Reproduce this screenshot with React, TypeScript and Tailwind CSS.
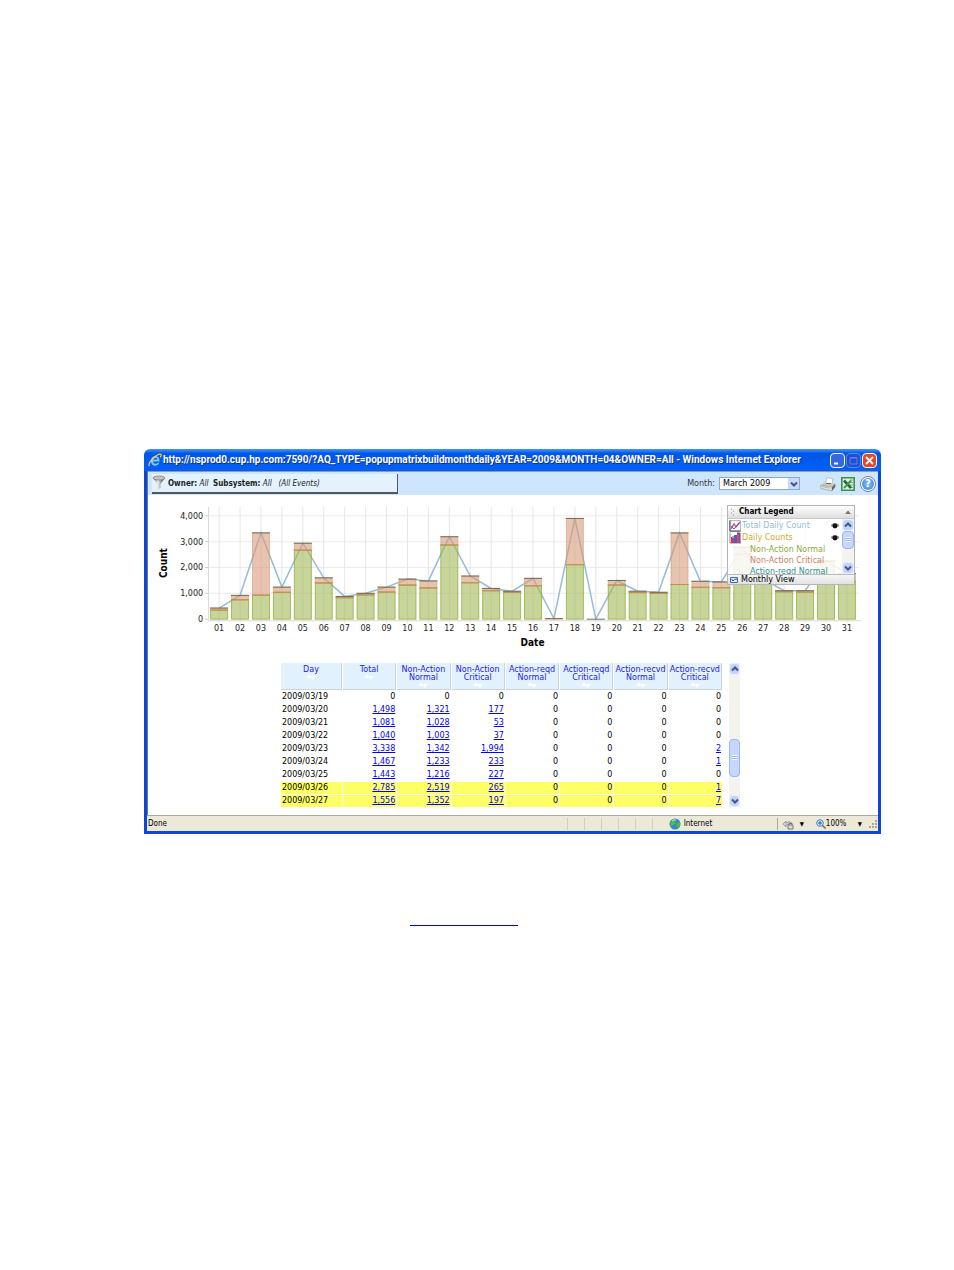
import React, { useState } from 'react';

interface DayCount {
  day: string;
  normal: number;
  total: number;
}

const days: DayCount[] = [
  { day: '01', normal: 350, total: 430 },
  { day: '02', normal: 750, total: 920 },
  { day: '03', normal: 930, total: 3340 },
  { day: '04', normal: 1040, total: 1240 },
  { day: '05', normal: 2670, total: 2940 },
  { day: '06', normal: 1400, total: 1600 },
  { day: '07', normal: 830, total: 880 },
  { day: '08', normal: 940, total: 1000 },
  { day: '09', normal: 1050, total: 1240 },
  { day: '10', normal: 1320, total: 1550 },
  { day: '11', normal: 1210, total: 1480 },
  { day: '12', normal: 2870, total: 3190 },
  { day: '13', normal: 1410, total: 1670 },
  { day: '14', normal: 1100, total: 1190 },
  { day: '15', normal: 1040, total: 1080 },
  { day: '16', normal: 1290, total: 1580 },
  { day: '17', normal: 0, total: 20 },
  { day: '18', normal: 2110, total: 3900 },
  { day: '19', normal: 0, total: 0 },
  { day: '20', normal: 1321, total: 1498 },
  { day: '21', normal: 1028, total: 1081 },
  { day: '22', normal: 1003, total: 1040 },
  { day: '23', normal: 1342, total: 3338 },
  { day: '24', normal: 1233, total: 1467 },
  { day: '25', normal: 1216, total: 1443 },
  { day: '26', normal: 2519, total: 2785 },
  { day: '27', normal: 1352, total: 1556 },
  { day: '28', normal: 1060, total: 1100 },
  { day: '29', normal: 1050, total: 1100 },
  { day: '30', normal: 2230, total: 2250 },
  { day: '31', normal: 1460, total: 1770 },
];

const columns = [
  ['Day'],
  ['Total'],
  ['Non-Action', 'Normal'],
  ['Non-Action', 'Critical'],
  ['Action-reqd', 'Normal'],
  ['Action-reqd', 'Critical'],
  ['Action-recvd', 'Normal'],
  ['Action-recvd', 'Critical'],
];

const rows = [
  ['2009/03/19', '0', '0', '0', '0', '0', '0', '0'],
  ['2009/03/20', '1,498', '1,321', '177', '0', '0', '0', '0'],
  ['2009/03/21', '1,081', '1,028', '53', '0', '0', '0', '0'],
  ['2009/03/22', '1,040', '1,003', '37', '0', '0', '0', '0'],
  ['2009/03/23', '3,338', '1,342', '1,994', '0', '0', '0', '2'],
  ['2009/03/24', '1,467', '1,233', '233', '0', '0', '0', '1'],
  ['2009/03/25', '1,443', '1,216', '227', '0', '0', '0', '0'],
  ['2009/03/26', '2,785', '2,519', '265', '0', '0', '0', '1'],
  ['2009/03/27', '1,556', '1,352', '197', '0', '0', '0', '7'],
];

const highlighted = ['2009/03/26', '2009/03/27'];

const BASE = 124;
const xOf = (i: number) => 71 + i * 20.9;
const yOf = (v: number) => BASE - v * 0.0258;

const Chart: React.FC = () => (
  <svg viewBox="0 0 729 156" className="block h-auto w-full font-['DejaVu_Sans',sans-serif] text-[8px]" role="img" aria-label="Daily event counts">
    {[1000, 2000, 3000, 4000].map((v) => (
      <path key={v} d={`M60 ${yOf(v)}H710`} stroke="#ebebeb" />
    ))}
    {days.map((d, i) => (
      <path key={d.day} d={`M${xOf(i)} 12V128`} stroke="#e6e6e6" />
    ))}
    {[0, 1000, 2000, 3000, 4000].map((v) => (
      <g key={v}>
        <path d={`M57 ${yOf(v)}h3`} stroke="#ccc" />
        <text x="55" y={yOf(v) + 3} textAnchor="end" fill="#222">
          {v.toLocaleString('en-US')}
        </text>
      </g>
    ))}
    <polyline
      points={days.map((d, i) => `${xOf(i)},${yOf(d.total)}`).join(' ')}
      fill="none"
      stroke="#94bbd8"
      strokeWidth="1.5"
    />
    {days.map((d, i) => {
      const x = xOf(i) - 8.5;
      const top = yOf(d.total);
      const mid = yOf(d.normal);
      return (
        <g key={d.day}>
          <rect x={x} y={top} width="17" height={mid - top} fill="#d99b7a" fillOpacity="0.6" stroke="#d99370" strokeOpacity="0.55" />
          <rect x={x} y={mid} width="17" height={BASE - mid} fill="#a2b956" fillOpacity="0.6" stroke="#8fac35" strokeOpacity="0.75" />
          <path d={`M${x - 0.5} ${mid}h18`} stroke="#cf8450" strokeOpacity={d.normal ? 0.9 : 0} />
          <path d={`M${x - 0.5} ${top}h18`} stroke="#6d6f55" />
        </g>
      );
    })}
    <path d="M60.5 12V125" stroke="#d8d8d8" />
    <path d="M60 125.500H712" stroke="#d8d8d8" />
    {days.map((d, i) => (
      <text key={d.day} x={xOf(i)} y="136" textAnchor="middle" fill="#222">
        {d.day}
      </text>
    ))}
    <g fontFamily="DejaVu Sans Condensed, DejaVu Sans, sans-serif" fontSize="10" fontWeight="700" textAnchor="middle">
      <text x="384" y="151">Date</text>
      <text transform="translate(19 68) rotate(-90)">Count</text>
    </g>
  </svg>
);

const Chevron: React.FC<{ down?: boolean }> = ({ down }) => (
  <svg viewBox="0 0 8 8" className="size-2">
    <path d={down ? 'M1 2.500l3 3 3-3' : 'M1 5.500l3-3 3 3'} fill="none" stroke="#3f5789" strokeWidth="2" />
  </svg>
);

const ScrollButton: React.FC<{ down?: boolean; label: string }> = ({ down, label }) => (
  <button
    aria-label={label}
    className="flex h-3 w-full shrink-0 items-center justify-center rounded-sm border border-[#e8effe] bg-[#c3d3fc]"
  >
    <Chevron down={down} />
  </button>
);

const Grip: React.FC = () => (
  <svg viewBox="0 0 6 6" className="size-1.5">
    <path d="M0 .5h6M0 2.500h6M0 4.500h6" stroke="#f0f5ff" />
    <path d="M0 1.500h6M0 3.500h6" stroke="#93abe6" strokeWidth=".7" />
  </svg>
);

const Eye: React.FC = () => (
  <svg viewBox="0 0 10 8" className="mr-0.5 h-2 w-2.5">
    <path d="M1 4Q5 .5 9 4 5 7.500 1 4z" fill="#8a8a8a" />
    <circle cx="5" cy="4" r="2.400" fill="#111" />
    <path d="M1 3.500Q5-.5 9 3.500" fill="none" stroke="#444" strokeWidth=".8" />
  </svg>
);

const Legend: React.FC = () => {
  const [open, setOpen] = useState(true);

  return (
    <div className="absolute top-[10px] right-[23px] w-32 border border-[#b5b5b5] bg-white/85 text-[8px] leading-3 text-black">
      <div className="flex h-[13px] items-center border-b border-[#c8c8c8] bg-linear-to-b from-white to-[#dedede]">
        <svg viewBox="0 0 8 8" className="ml-px size-2">
          <path d="M2 1h1M4 3h1M2 5h1M4 7h1" stroke="#888" />
        </svg>
        <span className="ml-0.5 font-['DejaVu_Sans_Condensed','DejaVu_Sans',sans-serif] font-bold">Chart Legend</span>
        <button aria-label="Collapse legend" onClick={() => setOpen(!open)} className="mr-0.5 ml-auto">
          <svg viewBox="0 0 8 6" className="h-1.5 w-2">
            <path d="M1 5L4 1.500l3 3.500z" fill="#777" />
          </svg>
        </button>
      </div>
      {open && (
        <div className="flex h-[55px]">
          <div className="min-w-0 grow overflow-hidden whitespace-nowrap">
            <div className="flex h-[13px] items-center pl-px">
              <svg viewBox="0 0 12 12" className="size-3">
                <path d="M.5.5h11v11H.5z" fill="#f5f5fa" stroke="#bbb" />
                <path d="M1 .5V11h10.500" fill="none" stroke="#444" />
                <path d="M2 9l3-5 2 3 4-5" fill="none" stroke="#c04a8d" strokeWidth="1.300" />
                <path d="M2 6l3 3 5-6" fill="none" stroke="#4e62bd" />
              </svg>
              <span className="ml-px grow text-[#94bbd8]">Total Daily Count</span>
              <Eye />
            </div>
            <div className="flex h-3 items-center pl-px">
              <svg viewBox="0 0 12 12" className="size-3">
                <path d="M1 .5V11h11" fill="none" stroke="#888" />
                <path d="M2 6h3v5H2z" fill="#cc376d" />
                <path d="M5 3h3v8H5z" fill="#5360b3" />
                <path d="M8 1h3v10H8z" fill="#d0457b" />
                <path d="M2 6l1-1h2M8 1h3v10" fill="none" stroke="#4c4b9c" />
              </svg>
              <span className="ml-px grow text-[#d1a730]">Daily Counts</span>
              <Eye />
            </div>
            <div className="flex flex-col pl-[22px]">
              <span className="h-[11px] text-[#91a83c]">Non-Action Normal</span>
              <span className="h-[11px] text-[#d0805c]">Non-Action Critical</span>
              <span className="h-[11px] text-[#329090]">Action-reqd Normal</span>
            </div>
          </div>
          <div className="flex w-3 shrink-0 flex-col bg-[#f4f3ee]">
            <ScrollButton label="Scroll legend up" />
            <div className="flex h-[18px] items-center justify-center rounded-sm border border-[#9fb6f0] bg-[#c6d7fd]">
              <Grip />
            </div>
            <div className="grow" />
            <ScrollButton down label="Scroll legend down" />
          </div>
        </div>
      )}
      <button className="flex h-[10px] w-full items-center border-t border-[#bbb] bg-linear-to-b from-[#f6f6f6] to-[#dcdcdc]/80">
        <svg viewBox="0 0 8 6" className="ml-0.5 h-1.5 w-2">
          <path d="M.5.5h7v5h-7z" fill="#d9e9fa" stroke="#3f6ea8" />
          <path d="M1.500 2l1.500 2 1.500-1.500L7 2" fill="none" stroke="#2a5a94" />
        </svg>
        <span className="ml-[3px]">Monthly View</span>
      </button>
    </div>
  );
};

const TitleBar: React.FC = () => (
  <header className="flex h-[22px] items-center rounded-t-md bg-linear-to-b from-[#3f97ff] via-[#0056e4] via-20% to-[#0060fb] pr-1 pl-1">
    <svg viewBox="0 0 14 14" className="size-3.5 shrink-0">
      <path d="M11.500 8.500H5q.3 2.300 2.500 2.300 1.500 0 2.200-1h1.700Q10 12.800 7.300 12.800 3 12.500 3 8T7.400 3q4.400.2 4.100 5.500zM5 6.500h4.500Q9.200 4.800 7.300 4.700 5.400 4.800 5 6.500z" fill="#79cbff" />
      <path d="M1.500 13Q-.5 11 5 5.500T13 1.300q.8.900-.7 3" fill="none" stroke="#ffd23d" strokeWidth="1.200" />
    </svg>
    <h1 className="ml-px grow font-['Roboto',sans-serif] text-[10px] leading-4 font-bold whitespace-nowrap text-white [text-shadow:1px_1px_0_#0b2f8c]">
      http://nsprod0.cup.hp.com:7590/?AQ_TYPE=popupmatrixbuildmonthdaily&amp;YEAR=2009&amp;MONTH=04&amp;OWNER=All - Windows Internet Explorer
    </h1>
    <div className="flex shrink-0 gap-px">
      <button aria-label="Minimize" className="size-[15px] rounded-sm border border-white bg-[#3567e0]">
        <svg viewBox="0 0 13 13"><path d="M3 9.500h4" stroke="#fff" strokeWidth="2" /></svg>
      </button>
      <button aria-label="Maximize" className="size-[15px] rounded-sm border border-[#5b86ea] bg-[#1d50d2]">
        <svg viewBox="0 0 13 13"><path d="M3 4h7v6H3zM3 3.500h7" fill="none" stroke="#5b84e8" /></svg>
      </button>
      <button aria-label="Close" className="size-[15px] rounded-sm border border-white bg-[#e0492a]">
        <svg viewBox="0 0 13 13"><path d="M3 3l7 7M10 3l-7 7" stroke="#fff" strokeWidth="1.800" /></svg>
      </button>
    </div>
  </header>
);

const Toolbar: React.FC = () => (
  <div className="flex h-6 items-center justify-between border-t border-[#999] bg-[#cee5fe] pr-0.5 pl-1 text-[8px]">
    <div className="flex h-5 w-[246px] items-center border-r border-b-2 border-[#53555f] bg-[#e4f2fe] text-[#222]">
      <svg viewBox="0 0 14 16" className="h-4 w-3.5">
        <defs>
          <linearGradient id="funnel">
            <stop offset="0" stopColor="#555" />
            <stop offset=".4" stopColor="#eee" />
            <stop offset="1" stopColor="#333" />
          </linearGradient>
        </defs>
        <path d="M1 3l4.500 6v6l3-2V9L13 3z" fill="url(#funnel)" />
        <ellipse cx="7" cy="3" rx="6" ry="2" fill="#c4c4c4" stroke="#777" strokeWidth=".7" />
      </svg>
      <span className="ml-0.5 pt-0.5 font-['DejaVu_Sans_Condensed','DejaVu_Sans',sans-serif] whitespace-pre">
        <b>Owner:</b> <i>All</i>{'  '}<b>Subsystem:</b> <i>All</i>{'   '}<i>(All Events)</i>
      </span>
    </div>
    <div className="flex items-center">
      <label htmlFor="month" className="mr-1 text-[#333]">Month:</label>
      <div className="relative mr-5">
        <select id="month" className="block h-[13px] w-[81px] appearance-none border border-[#8ea9c8] bg-white pl-[3px] text-[8px] leading-[11px] text-black">
          <option>March 2009</option>
          <option>April 2009</option>
        </select>
        <span className="pointer-events-none absolute top-px right-px flex h-[11px] w-[11px] items-center justify-center bg-[#c9d8fb]">
          <Chevron down />
        </span>
      </div>
      <div className="flex items-center gap-[5px]">
        <button aria-label="Print">
          <svg viewBox="0 0 16 16" className="size-4">
            <path d="M5 8L7 1.500l6 1.300L12 8z" fill="#fff" stroke="#aaa" strokeWidth=".7" />
            <path d="M.8 9L4 6.500l11 1L13 11z" fill="#c9c9bf" />
            <path d="M.8 9L12 11v4L.8 12.500z" fill="#e6e5de" stroke="#8f8f87" strokeWidth=".6" />
            <path d="M12 11l3.300-3.500V11L12 15z" fill="#696963" />
            <path d="M6 7.500h5" stroke="#666" />
            <path d="M2 10.500l8 1.700" stroke="#999" strokeWidth=".7" />
          </svg>
        </button>
        <button aria-label="Export to Excel">
          <svg viewBox="0 0 14 14" className="size-3.5">
            <path d="M.8.800h12.400v12.400H.8z" fill="#e4f0e2" stroke="#3c8f4c" strokeWidth="1.600" />
            <path d="M9 3h3M9 5.500h3M9 8h3M9 10.500h3" stroke="#75b37c" />
            <path d="M3 3.500l7 7.500" stroke="#216d37" strokeWidth="2.600" />
            <path d="M10 3.500L3 11" stroke="#3e9653" strokeWidth="2" />
          </svg>
        </button>
        <button aria-label="Help" className="flex size-4 items-center justify-center rounded-full border border-[#7184a0] bg-white p-px">
          <span className="flex size-3 items-center justify-center rounded-full bg-radial from-[#8dc6fa] to-[#2f78cd] text-[10px] leading-3 font-bold text-white">?</span>
        </button>
      </div>
    </div>
  </div>
);

const EventTable: React.FC = () => (
  <div className="flex items-stretch justify-center gap-1.5 pr-1.5 text-[8px]">
    <table className="w-[443px] table-fixed border-separate border-spacing-x-px border-spacing-y-0 text-black">
      <thead>
        <tr>
          {columns.map((lines, i) => (
            <th
              key={i}
              className={`h-[27px] border-r border-b border-[#ccd3da] bg-[#e2f1fe] p-0 align-top leading-2 font-normal whitespace-nowrap text-[#2222e8] ${i === 0 ? 'w-[61px]' : ''}`}
            >
              <div className="flex flex-col items-center pt-[3px]">
                {lines.map((line) => (
                  <span key={line}>{line}</span>
                ))}
                <svg viewBox="0 0 10 6" className="h-1.5 w-2.5">
                  <path d="M0 4l3-4 3 4zM4 2h6L7 6z" fill="#fff" />
                </svg>
              </div>
            </th>
          ))}
        </tr>
      </thead>
      <tbody>
        {rows.map((row) => (
          <tr key={row[0]}>
            {row.map((cell, i) => (
              <td
                key={i}
                className={`h-[13px] border-t border-white p-0 leading-3 ${i === 0 ? 'pl-px' : 'pr-px text-right'} ${
                  highlighted.includes(row[0]) ? 'bg-[#ffff66]' : ''
                }`}
              >
                {i > 0 && cell !== '0' ? (
                  <a href="#events" className="text-[#0000ee] underline">{cell}</a>
                ) : (
                  cell
                )}
              </td>
            ))}
          </tr>
        ))}
      </tbody>
    </table>
    <div className="flex w-[11px] flex-col bg-[#f4f3ee]">
      <ScrollButton label="Scroll up" />
      <div className="grow" />
      <div className="flex h-[38px] items-center justify-center rounded-sm border border-[#9fb6f0] bg-[#c6d7fd]">
        <Grip />
      </div>
      <div className="h-[18px]" />
      <ScrollButton down label="Scroll down" />
    </div>
  </div>
);

const StatusBar: React.FC = () => (
  <footer className="flex h-4 items-center border-t border-[#aca899] bg-[#ece9d8] pl-px font-['DejaVu_Sans_Condensed','DejaVu_Sans',sans-serif] text-[8px] text-black">
    <span className="grow pt-px">Done</span>
    {[0, 1, 2, 3, 4, 5].map((n) => (
      <span key={n} className="mr-4 h-3 w-px bg-[#d0cdbc]" />
    ))}
    <svg viewBox="0 0 12 12" className="size-3">
      <circle cx="6" cy="6" r="5.500" fill="#3685cf" />
      <path d="M2 3q3-3 5-1L6 4l1 2-3 1-2 2Q.3 6 2 3zM8 5l3-1q1 4-2 6l-2-2z" fill="#51b948" />
      <path d="M3 3q2-2 4-1" stroke="#bce4f8" fill="none" />
    </svg>
    <span className="ml-[3px] w-[93px] pt-px">Internet</span>
    <span className="h-3 w-px bg-[#aca899]" />
    <svg viewBox="0 0 14 12" className="ml-1 h-3 w-3.5">
      <path d="M1 6l3-3v2q3-3 6 0l-1 3Q7 5 4 7v2z" fill="#ccc" stroke="#888" strokeWidth=".7" />
      <path d="M6 7h5v4H6zM7 7V5.500h3V7" fill="#ddd" stroke="#777" />
    </svg>
    <span className="ml-1 text-[6px]">▼</span>
    <svg viewBox="0 0 10 10" className="ml-3 size-2.5">
      <path d="M6 6l3.500 3.500" stroke="#8b6d40" strokeWidth="1.600" />
      <circle cx="4" cy="4" r="3.300" fill="#d8edff" stroke="#3e7fcc" />
      <path d="M2 4h4M4 2v4" stroke="#1c5cb6" />
    </svg>
    <span className="w-8 pt-px">100%</span>
    <span className="text-[6px]">▼</span>
    <svg viewBox="0 0 10 10" className="ml-1.5 size-2.5">
      <path d="M7 2h2M4 5h2M7 5h2M1 8h2M4 8h2M7 8h2" stroke="#aaa795" strokeWidth="2" />
    </svg>
  </footer>
);

export default function App() {
  return (
    <main className="min-h-screen bg-white pt-[449px] font-['DejaVu_Sans',sans-serif]">
      <section className="mr-[73px] ml-36">
        <TitleBar />
        <div className="border-x-3 border-b-3 border-[#0a46dc]">
          <div className="border-l border-[#777]">
            <Toolbar />
            <div className="relative">
              <Chart />
              <Legend />
            </div>
            <div className="mt-3 pb-2">
              <EventTable />
            </div>
          </div>
          <StatusBar />
        </div>
      </section>
      <div className="mt-[91px] ml-[410px] w-[108px] border-t border-[#0000c8]" />
    </main>
  );
}
